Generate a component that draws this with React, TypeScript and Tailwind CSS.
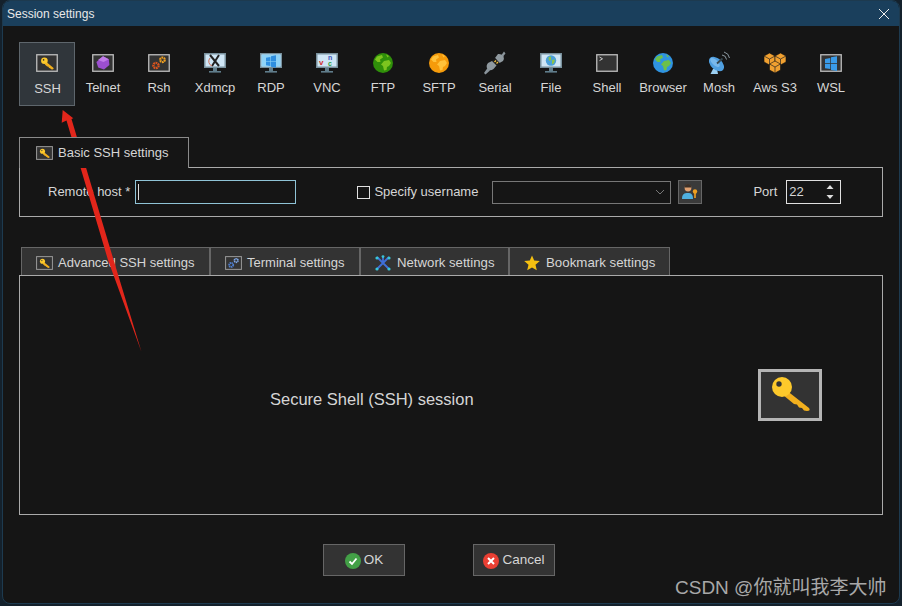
import type { ReactNode } from "react";

function KeyShape() {
    return (
        <g>
            <path d="M10.4 8 L17.6 14 Q18 15.4 16.4 15.6 L15 15.2 L14.2 14.2 L13 14 L12.4 12.8 L11.2 12.6 L8.8 10.4 Z" fill="#f2b01e" />
            <circle cx="8.4" cy="6.8" r="3.3" fill="#fdc92b" />
            <circle cx="7.6" cy="5.9" r="0.8" fill="#333" />
        </g>
    );
}

function Boxed({ w = 22, h = 18, children }: { w?: number; h?: number; children: ReactNode }) {
    return (
        <svg width={w} height={h} viewBox="0 0 22 18">
            <rect x="0.75" y="0.75" width="20.5" height="16.5" fill="#333" stroke="#bdbdbd" strokeWidth="1.3" />
            {children}
        </svg>
    );
}

const KeyBox = () => (
    <Boxed>
        <KeyShape />
    </Boxed>
);

function Monitor({ children }: { children: ReactNode }) {
    return (
        <svg width="24" height="22" viewBox="0 0 24 22">
            <rect x="1" y="1" width="22" height="15" fill="#78909c" />
            <rect x="2.5" y="2.5" width="19" height="12" fill="#cfe6f5" />
            <rect x="10" y="16" width="4" height="3" fill="#607d8b" />
            <rect x="6" y="19" width="12" height="1.6" fill="#607d8b" />
            {children}
        </svg>
    );
}

function Globe({ sea, land }: { sea: string; land: string }) {
    return (
        <svg width="22" height="22" viewBox="0 0 22 22">
            <circle cx="11" cy="11" r="10" fill={sea} />
            <path d="M5 4.5 L10 3 L11 5.5 L8 7.5 L8.5 10 L5.5 10 L3 7.5 Z" fill={land} />
            <path d="M12 9 L17 8 L19 11 L17 14 L15 15 L14.5 18 L12 18.5 L11 14 L9 12.5 Z" fill={land} />
            <path d="M14 2.5 L17 4 L15.5 5.5 Z" fill={land} />
        </svg>
    );
}

function WinLogo({ x, y, s, c }: { x: number; y: number; s: number; c: string }) {
    return (
        <g fill={c}>
            <path d={`M${x} ${y + s * 0.12} L${x + s * 0.44} ${y + s * 0.04} V${y + s * 0.47} H${x} Z`} />
            <path d={`M${x + s * 0.5} ${y - s * 0.03} L${x + s} ${y - s * 0.12} V${y + s * 0.47} H${x + s * 0.5} Z`} />
            <path d={`M${x} ${y + s * 0.53} H${x + s * 0.44} V${y + s * 0.96} L${x} ${y + s * 0.88} Z`} />
            <path d={`M${x + s * 0.5} ${y + s * 0.53} H${x + s} V${y + s * 1.12} L${x + s * 0.5} ${y + s * 1.03} Z`} />
        </g>
    );
}

function Gears({ a, b }: { a: string; b: string }) {
    return (
        <g fill="none">
            <circle cx="8" cy="11.5" r="2.6" stroke={a} strokeWidth="2.4" strokeDasharray="1.7 0.6" />
            <circle cx="14.5" cy="5.8" r="2.3" stroke={b} strokeWidth="2.2" strokeDasharray="1.6 0.6" />
        </g>
    );
}

const tools: { label: string; icon: ReactNode }[] = [
    { label: "SSH", icon: <KeyBox /> },
    {
        label: "Telnet",
        icon: (
            <Boxed>
                <path d="M11 2.2 L16.8 5.2 L17.4 11 L12 15.4 L6.2 13.4 L4.4 8 Z" fill="#9c4fd0" />
                <path d="M11 2.2 L16.8 5.2 L11.5 8 L6 6 Z" fill="#c07ae8" />
            </Boxed>
        ),
    },
    {
        label: "Rsh",
        icon: (
            <Boxed>
                <Gears a="#d9541e" b="#f0a020" />
            </Boxed>
        ),
    },
    {
        label: "Xdmcp",
        icon: (
            <Monitor>
                <path d="M7 3 L16 14 M16 3 L9 14" stroke="#222" strokeWidth="2" />
                <path d="M7 6 A5 5 0 0 0 9 14" stroke="#d0705a" strokeWidth="1" fill="none" />
            </Monitor>
        ),
    },
    {
        label: "RDP",
        icon: (
            <Monitor>
                <rect x="2.5" y="2.5" width="19" height="12" fill="#8fd3f7" />
                <WinLogo x={7} y={4.5} s={10} c="#2f8fe0" />
            </Monitor>
        ),
    },
    {
        label: "VNC",
        icon: (
            <Monitor>
                <text x="4" y="13" fontSize="8" fontWeight="700" fontFamily="Liberation Sans" fill="#d32f2f">v</text>
                <text x="13" y="7.5" fontSize="7" fontWeight="700" fontFamily="Liberation Sans" fill="#3f51b5">n</text>
                <text x="13" y="13.5" fontSize="7" fontWeight="700" fontFamily="Liberation Sans" fill="#2e9e3f">c</text>
            </Monitor>
        ),
    },
    { label: "FTP", icon: <Globe sea="#2f8f0a" land="#7cc41f" /> },
    { label: "SFTP", icon: <Globe sea="#f59b0b" land="#ffc23a" /> },
    {
        label: "Serial",
        icon: (
            <svg width="24" height="24" viewBox="0 0 24 24">
                <path d="M21 0.5 L22.5 2.5 L20 5.5 L18.5 4 Z" fill="#8a949b" />
                <path d="M15 3 Q18 2.5 20.5 5 Q21.5 8 20 10 L16.5 12 L12 7 Z" fill="#8f999f" />
                <path d="M12 7 L16.5 12 L13.5 14.5 L9 10 Z" fill="#1b1b1b" />
                <path d="M11.5 11 L13 9.5 M13.5 12.5 L15 11" stroke="#f0c040" strokeWidth="1.4" />
                <path d="M9 10 L13.5 14.5 L10.5 18 Q7 20.5 4.5 18 Q2.5 15 5 12 Z" fill="#8f999f" />
                <path d="M4.5 17 L7 19.5 L2.5 23.5 L1 22 Z" fill="#8a949b" />
            </svg>
        ),
    },
    {
        label: "File",
        icon: (
            <Monitor>
                <circle cx="12" cy="8.5" r="5.2" fill="#4a9fd8" />
                <path d="M9.5 5 L12 4.5 L12 8 L10 9 Z M13 8 L16 7.5 L15 11 L13 12.5 Z" fill="#8bc34a" />
            </Monitor>
        ),
    },
    {
        label: "Shell",
        icon: (
            <Boxed>
                <path d="M3.5 3 L6.5 4.8 L3.5 6.6" stroke="#ddd" strokeWidth="0.9" fill="none" />
            </Boxed>
        ),
    },
    { label: "Browser", icon: <Globe sea="#2f93e0" land="#6cc04a" /> },
    {
        label: "Mosh",
        icon: (
            <svg width="24" height="24" viewBox="0 0 24 24">
                <path d="M6 18 L3.5 23 H11 L10 18 Z" fill="#9cd0f2" />
                <ellipse cx="9.5" cy="13" rx="8.8" ry="5.6" transform="rotate(42 9.5 13)" fill="#4f9fe0" />
                <ellipse cx="8" cy="11.5" rx="6" ry="2.6" transform="rotate(42 8 11.5)" fill="#78b8ec" />
                <path d="M10 12.5 L15.5 7.5" stroke="#37474f" strokeWidth="1.8" />
                <path d="M15 4 A5 5 0 0 1 19.5 8.5 M17 1 A7.5 7.5 0 0 1 22.5 7" stroke="#9aa8b0" strokeWidth="0.9" fill="none" />
            </svg>
        ),
    },
    {
        label: "Aws S3",
        icon: (
            <svg width="24" height="22" viewBox="0 0 24 22">
                <g fill="#f0a030" stroke="#111" strokeWidth="0.6">
                    <path d="M1 4 L6.5 1 L12 4 V10 L6.5 13 L1 10 Z" />
                    <path d="M12 4 L17.5 1 L23 4 V10 L17.5 13 L12 10 Z" />
                    <path d="M6.5 12 L12 9 L17.5 12 V18 L12 21 L6.5 18 Z" />
                </g>
                <path d="M1 4 L6.5 7 L12 4 M6.5 7 V13 M12 4 L17.5 7 L23 4 M17.5 7 V13 M6.5 12 L12 15 L17.5 12 M12 15 V21" stroke="#222" strokeWidth="0.7" fill="none" />
            </svg>
        ),
    },
    {
        label: "WSL",
        icon: (
            <Boxed>
                <WinLogo x={5} y={3.6} s={12} c="#3a9be8" />
            </Boxed>
        ),
    },
];

function Tab({ className, icon, label }: { className: string; icon: ReactNode; label: string }) {
    return (
        <div className={`${className} flex h-[28px] items-center border-x border-t border-[#666] bg-[#333] pl-[14px] pt-[2px]`}>
            {icon}
            <span>{label}</span>
        </div>
    );
}

const SmallKey = () => (
    <svg width="17" height="14" viewBox="0 0 22 18">
        <rect x="0.75" y="0.75" width="20.5" height="16.5" fill="#333" stroke="#999" strokeWidth="1.3" />
        <KeyShape />
    </svg>
);

export default function App() {
    return (
        <div className="relative h-[606px] w-[902px] overflow-hidden bg-[#14212c] font-['Liberation_Sans',sans-serif] text-[13px] text-[#d6d6d6]">
            <div className="ml-[2px] flex h-[604px] w-[898px] flex-col overflow-hidden rounded-[8px] border border-[#1d3a4f] bg-[#151515]">
                <div className="flex h-[25px] shrink-0 items-center justify-between bg-[#1a3f5c] pl-[4px] pr-[9px] text-[12px] text-[#e8e8e8]">
                    <span>Session settings</span>
                    <svg width="12" height="12" viewBox="0 0 12 12">
                        <path d="M1 1 L11 11 M11 1 L1 11" stroke="#f0f0f0" strokeWidth="1" />
                    </svg>
                </div>

                {/* session types */}
                <div className="mt-[16px] flex pl-[16px]">
                    {tools.map((t, i) => (
                        <div
                            key={t.label}
                            className={`flex h-[64px] w-[56px] flex-col items-center border ${i === 0 ? "border-[#5e666c] bg-[#30363b]" : "border-transparent"}`}
                        >
                            <div className="flex h-[35px] items-center justify-center pt-[5px]">{t.icon}</div>
                            <span className={`whitespace-nowrap ${i === 0 ? "ml-[1px] mt-[1px]" : ""}`}>{t.label}</span>
                        </div>
                    ))}
                </div>

                {/* basic settings */}
                <div className="ml-[16px] mt-[31px] w-[864px]">
                    <div className="relative z-10 -mb-px flex h-[31px] w-[170px] items-center gap-[5px] border-x border-t border-[#8a8a8a] bg-[#151515] pl-[16px]">
                        <SmallKey />
                        <span>Basic SSH settings</span>
                    </div>
                    <div className="flex h-[50px] items-center border border-[#aaa] pl-[28px]">
                        <span>Remote host *</span>
                        <div className="ml-[5px] flex h-[24px] w-[161px] items-center border border-[#8fc3d6] pl-[2px]">
                            <div className="h-[16px] w-px bg-[#ddd]" />
                        </div>
                        <div className="ml-[61px] h-[13px] w-[13px] border border-[#e0e0e0]" />
                        <span className="ml-[4px]">Specify username</span>
                        <div className="ml-[14px] flex h-[23px] w-[179px] items-center justify-end border border-[#777] pr-[5px]">
                            <svg width="10" height="6" viewBox="0 0 10 6">
                                <path d="M1 1 L5 5 L9 1" stroke="#777" strokeWidth="1" fill="none" />
                            </svg>
                        </div>
                        <div className="ml-[7px] flex h-[24px] w-[24px] items-center justify-center border border-[#666] bg-[#3a3a3a]">
                            <svg width="18" height="18" viewBox="0 0 18 18">
                                <circle cx="7" cy="5" r="3.4" fill="#e0a070" />
                                <path d="M3.6 4.5 A3.4 3.4 0 0 1 10.4 4.5 Z" fill="#3a3028" />
                                <path d="M1 16 C1 11 3 10 7 10 C10 10 12 11 12 16 Z" fill="#4fb0e0" />
                                <circle cx="14" cy="8.5" r="2.2" fill="#f0a020" />
                                <rect x="13.2" y="9" width="1.6" height="6" fill="#f0a020" />
                            </svg>
                        </div>
                        <span className="ml-[51px]">Port</span>
                        <div className="ml-[9px] flex h-[24px] w-[55px] items-center justify-between border border-[#e0e0e0] pl-[2px] pr-[6px]">
                            <span>22</span>
                            <svg width="8" height="16" viewBox="0 0 8 16">
                                <path d="M0.5 5 L4 1 L7.5 5 Z M0.5 11 L4 15 L7.5 11 Z" fill="#ddd" />
                            </svg>
                        </div>
                    </div>
                </div>

                {/* advanced settings */}
                <div className="ml-[18px] mt-[30px] flex">
                    <Tab className="w-[189px] gap-[5px]" icon={<SmallKey />} label="Advanced SSH settings" />
                    <Tab
                        className="w-[150px] gap-[5px]"
                        icon={
                            <svg width="17" height="14" viewBox="0 0 22 18">
                                <rect x="0.75" y="0.75" width="20.5" height="16.5" fill="#333" stroke="#999" strokeWidth="1.3" />
                                <Gears a="#4f7fd0" b="#7fa8e8" />
                            </svg>
                        }
                        label="Terminal settings"
                    />
                    <Tab
                        className="w-[149px] gap-[6px] text-[13.2px]"
                        icon={
                            <svg width="16" height="16" viewBox="0 0 16 16">
                                <path d="M8 8 L2 2 M8 8 L14 2 M8 8 L8 1 M8 8 L2 14 M8 8 L14 14" stroke="#3f6fd8" strokeWidth="1.8" />
                                <g fill="#38c6d8">
                                    <circle cx="2" cy="3" r="1.6" />
                                    <circle cx="14" cy="3" r="1.6" />
                                    <circle cx="8" cy="1.6" r="1.4" />
                                    <circle cx="2" cy="14" r="1.6" />
                                    <circle cx="14" cy="14" r="1.6" />
                                </g>
                            </svg>
                        }
                        label="Network settings"
                    />
                    <Tab
                        className="w-[161px] gap-[6px] text-[13.3px]"
                        icon={
                            <svg width="16" height="16" viewBox="0 0 16 16">
                                <path d="M8 0.5 L10.2 5.6 L15.8 6.1 L11.5 9.8 L12.8 15.3 L8 12.4 L3.2 15.3 L4.5 9.8 L0.2 6.1 L5.8 5.6 Z" fill="#f5c011" />
                            </svg>
                        }
                        label="Bookmark settings"
                    />
                </div>
                <div className="ml-[16px] flex h-[240px] w-[864px] items-center border border-[#aaa] pl-[250px] pr-[60px]">
                    <span className="mt-[8px] text-[16.5px]">Secure Shell (SSH) session</span>
                    <div className="ml-auto flex h-[52px] w-[64px] items-center justify-center border-[3px] border-[#b5b5b5] bg-[#333]">
                        <svg width="42" height="40" viewBox="-2 0 42 40">
                            <path d="M15 15 L38 33 Q40 36 36 36 L33 35.5 L31 33 L28 32.5 L26 29.5 L23 29 L12 20 Z" fill="#f2b01e" />
                            <circle cx="11" cy="12" r="10" fill="#fdc92b" />
                            <circle cx="8" cy="9" r="2.7" fill="#333" />
                        </svg>
                    </div>
                </div>

                {/* buttons */}
                <div className="ml-[320px] mt-[29px] flex gap-[68px]">
                    <button className="flex h-[32px] w-[82px] items-center justify-center gap-[3px] border border-[#666] bg-[#333] pt-[1px] text-[13.5px] text-[#d6d6d6]">
                        <svg width="16" height="16" viewBox="0 0 16 16">
                            <circle cx="8" cy="8" r="8" fill="#43a047" />
                            <path d="M4.5 8.5 L7 11 L11.5 5.5" stroke="#fff" strokeWidth="1.8" fill="none" />
                        </svg>
                        OK
                    </button>
                    <button className="flex h-[32px] w-[82px] items-center justify-center gap-[3px] border border-[#666] bg-[#333] pt-[1px] text-[13.5px] text-[#d6d6d6]">
                        <svg width="16" height="16" viewBox="0 0 16 16">
                            <circle cx="8" cy="8" r="8" fill="#ea3f33" />
                            <path d="M5 5 L11 11 M11 5 L5 11" stroke="#fff" strokeWidth="2" />
                        </svg>
                        Cancel
                    </button>
                </div>
            </div>

            {/* watermark */}
            <span className="absolute left-[675px] top-[574px] whitespace-nowrap font-['Liberation_Sans','Noto_Sans_CJK_SC',sans-serif] text-[19px] text-[#a8a8a8]">
                CSDN @你就叫我李大帅
            </span>

            {/* red arrow annotation */}
            <svg className="absolute left-0 top-0" width="902" height="606" viewBox="0 0 902 606">
                <path d="M62.7 110 L73.3 118.3 L71.5 119 L113 258 L141.5 352 L108 260 L66.5 120.5 L61.7 122.7 Z" fill="#e2261b" />
            </svg>
        </div>
    );
}
